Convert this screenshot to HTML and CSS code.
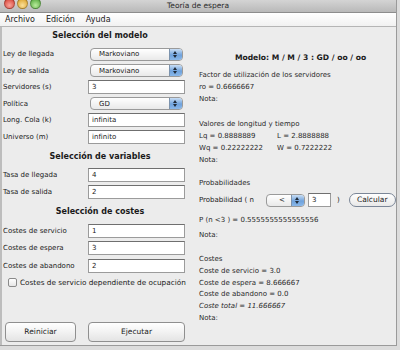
FILE: index.html
```html
<!DOCTYPE html>
<html lang="es">
<head>
    <meta charset="UTF-8">
    <title>Teoría de espera</title>
    <link rel="stylesheet" href="styles.css">
</head>
<body>
<div class="window">
    <!-- Title bar -->
    <div class="titlebar">
        <div class="lights">
            <span class="light red"></span>
            <span class="light yellow"></span>
            <span class="light green"></span>
        </div>
        <div class="title">Teoría de espera</div>
    </div>

    <!-- Menu -->
    <div class="menubar">
        <span class="menu">Archivo</span>
        <span class="menu">Edición</span>
        <span class="menu">Ayuda</span>
    </div>

    <div class="content">
        <!-- Left: inputs -->
        <div class="left">
            <h2 class="section first">Selección del modelo</h2>
            <div class="row"><label>Ley de llegada</label><div class="popup"><span>Markoviano</span><i class="cap"></i></div></div>
            <div class="row"><label>Ley de salida</label><div class="popup"><span>Markoviano</span><i class="cap"></i></div></div>
            <div class="row"><label>Servidores (s)</label><div class="field">3</div></div>
            <div class="row"><label>Política</label><div class="popup"><span>GD</span><i class="cap"></i></div></div>
            <div class="row"><label>Long. Cola (k)</label><div class="field">infinita</div></div>
            <div class="row"><label>Universo (m)</label><div class="field">infinito</div></div>

            <h2 class="section">Selección de variables</h2>
            <div class="row"><label>Tasa de llegada</label><div class="field">4</div></div>
            <div class="row"><label>Tasa de salida</label><div class="field">2</div></div>

            <h2 class="section">Selección de costes</h2>
            <div class="row tall"><label>Costes de servicio</label><div class="field">1</div></div>
            <div class="row tall"><label>Costes de espera</label><div class="field">3</div></div>
            <div class="row tall"><label>Costes de abandono</label><div class="field">2</div></div>

            <div class="check"><span class="box"></span>Costes de servicio dependiente de ocupación</div>

            <div class="buttons">
                <div class="btn reset">Reiniciar</div>
                <div class="btn run">Ejecutar</div>
            </div>
        </div>

        <!-- Right: results -->
        <div class="right">
            <h2 class="model">Modelo: M / M / 3 : GD / oo / oo</h2>

            <div class="block util">
                <p>Factor de utilización de los servidores</p>
                <p>ro = 0.6666667</p>
                <p>Nota:</p>
            </div>

            <div class="block times">
                <p>Valores de longitud y tiempo</p>
                <p class="pair"><span>Lq = 0.8888889</span><span>L = 2.8888888</span></p>
                <p class="pair"><span>Wq = 0.22222222</span><span>W = 0.7222222</span></p>
                <p>Nota:</p>
            </div>

            <div class="block">
                <p>Probabilidades</p>
                <div class="prob">
                    <span class="plabel">Probabilidad ( n</span>
                    <div class="popup small"><span>&lt;</span><i class="cap"></i></div>
                    <div class="field small">3</div>
                    <span class="paren">)</span>
                    <div class="pill">Calcular</div>
                </div>
                <p class="gap">P (n &lt;3 ) = 0.5555555555555556</p>
                <p>Nota:</p>
            </div>

            <div class="block">
                <p>Costes</p>
                <p>Coste de servicio = 3.0</p>
                <p>Coste de espera = 8.666667</p>
                <p>Coste de abandono = 0.0</p>
                <p><em>Coste total = 11.666667</em></p>
                <p>Nota:</p>
            </div>
        </div>
    </div>
</div>
</body>
</html>
```

FILE: styles.css
```css
body {
    margin: 0;
    background: #dcdcdc;
    font-family: "DejaVu Sans", sans-serif;
    font-size: 7px;
    color: #1a1a1a;
}
.window {
    width: 397px;
    height: 346px;
    background: #ececec;
    border-right: 1px solid #9a9a9a;
    border-bottom: 1px solid #9a9a9a;
    box-sizing: border-box;
    display: flex;
    flex-direction: column;
}
.titlebar {
    height: 12px;
    background: linear-gradient(#d4d4d4, #b9b9b9);
    border-bottom: 1px solid #8d8d8d;
    position: relative;
}
.lights {
    display: flex;
    gap: 2px;
    padding-left: 4px;
    margin-top: -2px;
}
.light {
    width: 11px;
    height: 11px;
    border-radius: 50%;
    border: 1px solid rgba(0, 0, 0, 0.25);
    box-sizing: border-box;
}
.red { background: radial-gradient(circle at 50% 70%, #f9a39a, #d4372b); }
.yellow { background: radial-gradient(circle at 50% 70%, #fbe09a, #d89a1c); }
.green { background: radial-gradient(circle at 50% 70%, #b8eb9c, #4aa233); }
.title {
    position: absolute;
    left: 0;
    right: 0;
    top: 0;
    text-align: center;
    font-size: 7.5px;
    line-height: 11px;
    color: #2a2a2a;
}
.menubar {
    height: 13px;
    background: linear-gradient(#ffffff, #f1f1f1);
    border-bottom: 1px solid #b5b5b5;
    display: flex;
    align-items: center;
    padding-left: 5px;
    gap: 11px;
    font-size: 8px;
}
.content {
    flex: 1;
    display: flex;
    border-left: 2px solid #bdbdbd;
}
.left {
    width: 186px;
    display: flex;
    flex-direction: column;
    padding-left: 1px;
}
.section {
    margin: 0;
    height: 22px;
    line-height: 23px;
    text-align: center;
    font-size: 8px;
    font-weight: bold;
    padding-left: 8px;
}
.section.first {
    height: 19px;
    line-height: 17px;
}
.row {
    display: flex;
    align-items: center;
    height: 16.5px;
}
.row.tall {
    height: 17.5px;
}
.row label {
    width: 85px;
}
.popup {
    width: 93px;
    height: 13px;
    margin-left: 2px;
    box-sizing: border-box;
    border: 1px solid #9a9a9a;
    border-radius: 4px;
    background: linear-gradient(#ffffff, #e9e9e9);
    display: flex;
    align-items: center;
    overflow: hidden;
    position: relative;
}
.popup span {
    flex: 1;
    padding-left: 8px;
}
.cap {
    width: 12px;
    height: 100%;
    background: linear-gradient(#c9def5, #6fa2dc 55%, #8ab8ea);
    border-left: 1px solid #7c93ad;
    position: relative;
}
.cap::before,
.cap::after {
    content: "";
    position: absolute;
    left: 3px;
    border-left: 2.5px solid transparent;
    border-right: 2.5px solid transparent;
}
.cap::before {
    top: 2px;
    border-bottom: 3px solid #1f2a38;
}
.cap::after {
    bottom: 2px;
    border-top: 3px solid #1f2a38;
}
.field {
    width: 97px;
    height: 14px;
    box-sizing: border-box;
    border: 1px solid #9b9b9b;
    border-top-color: #6f6f6f;
    background: #ffffff;
    padding-left: 3px;
    line-height: 12px;
}
.check {
    display: flex;
    align-items: center;
    gap: 3px;
    margin-top: 3px;
    padding-left: 5px;
    font-size: 7.3px;
}
.box {
    width: 9px;
    height: 9px;
    box-sizing: border-box;
    border: 1px solid #8a8a8a;
    border-radius: 2px;
    background: linear-gradient(#ffffff, #e6e6e6);
}
.buttons {
    margin-top: auto;
    margin-bottom: 3px;
    display: flex;
    gap: 12px;
    padding-left: 2px;
}
.btn {
    height: 20px;
    line-height: 18px;
    box-sizing: border-box;
    border: 1px solid #8f8f8f;
    border-radius: 4px;
    background: linear-gradient(#ffffff, #f2f2f2 50%, #e4e4e4);
    text-align: center;
    font-size: 7.5px;
}
.reset { width: 71px; }
.run { width: 97px; }
.right {
    flex: 1;
    padding-left: 10px;
    padding-top: 26px;
}
.model {
    margin: 0 0 8px;
    text-align: center;
    font-size: 7.6px;
    font-weight: bold;
    padding-left: 6px;
}
.block {
    margin-bottom: 12px;
}
.block.util {
    margin-bottom: 14px;
}
.block.times {
    margin-bottom: 11px;
}
.block p {
    margin: 0;
    line-height: 11.8px;
    color: #2a2a2a;
}
.pair span:first-child {
    display: inline-block;
    width: 78px;
}
.prob {
    display: flex;
    align-items: center;
    height: 16px;
    margin-top: 3px;
}
.plabel {
    width: 67px;
}
.popup.small {
    width: 39px;
    margin-left: 0;
}
.popup.small span {
    padding-left: 12px;
}
.field.small {
    width: 23px;
    margin-left: 3px;
}
.paren {
    margin-left: 6px;
}
.pill {
    margin-left: 9px;
    width: 47px;
    height: 14px;
    line-height: 12px;
    box-sizing: border-box;
    border: 1px solid #7b8697;
    border-radius: 7px;
    background: linear-gradient(#ffffff, #e8e8e8);
    text-align: center;
    font-size: 7.5px;
}
.gap {
    margin-top: 7px !important;
    margin-bottom: 3px !important;
}
```
